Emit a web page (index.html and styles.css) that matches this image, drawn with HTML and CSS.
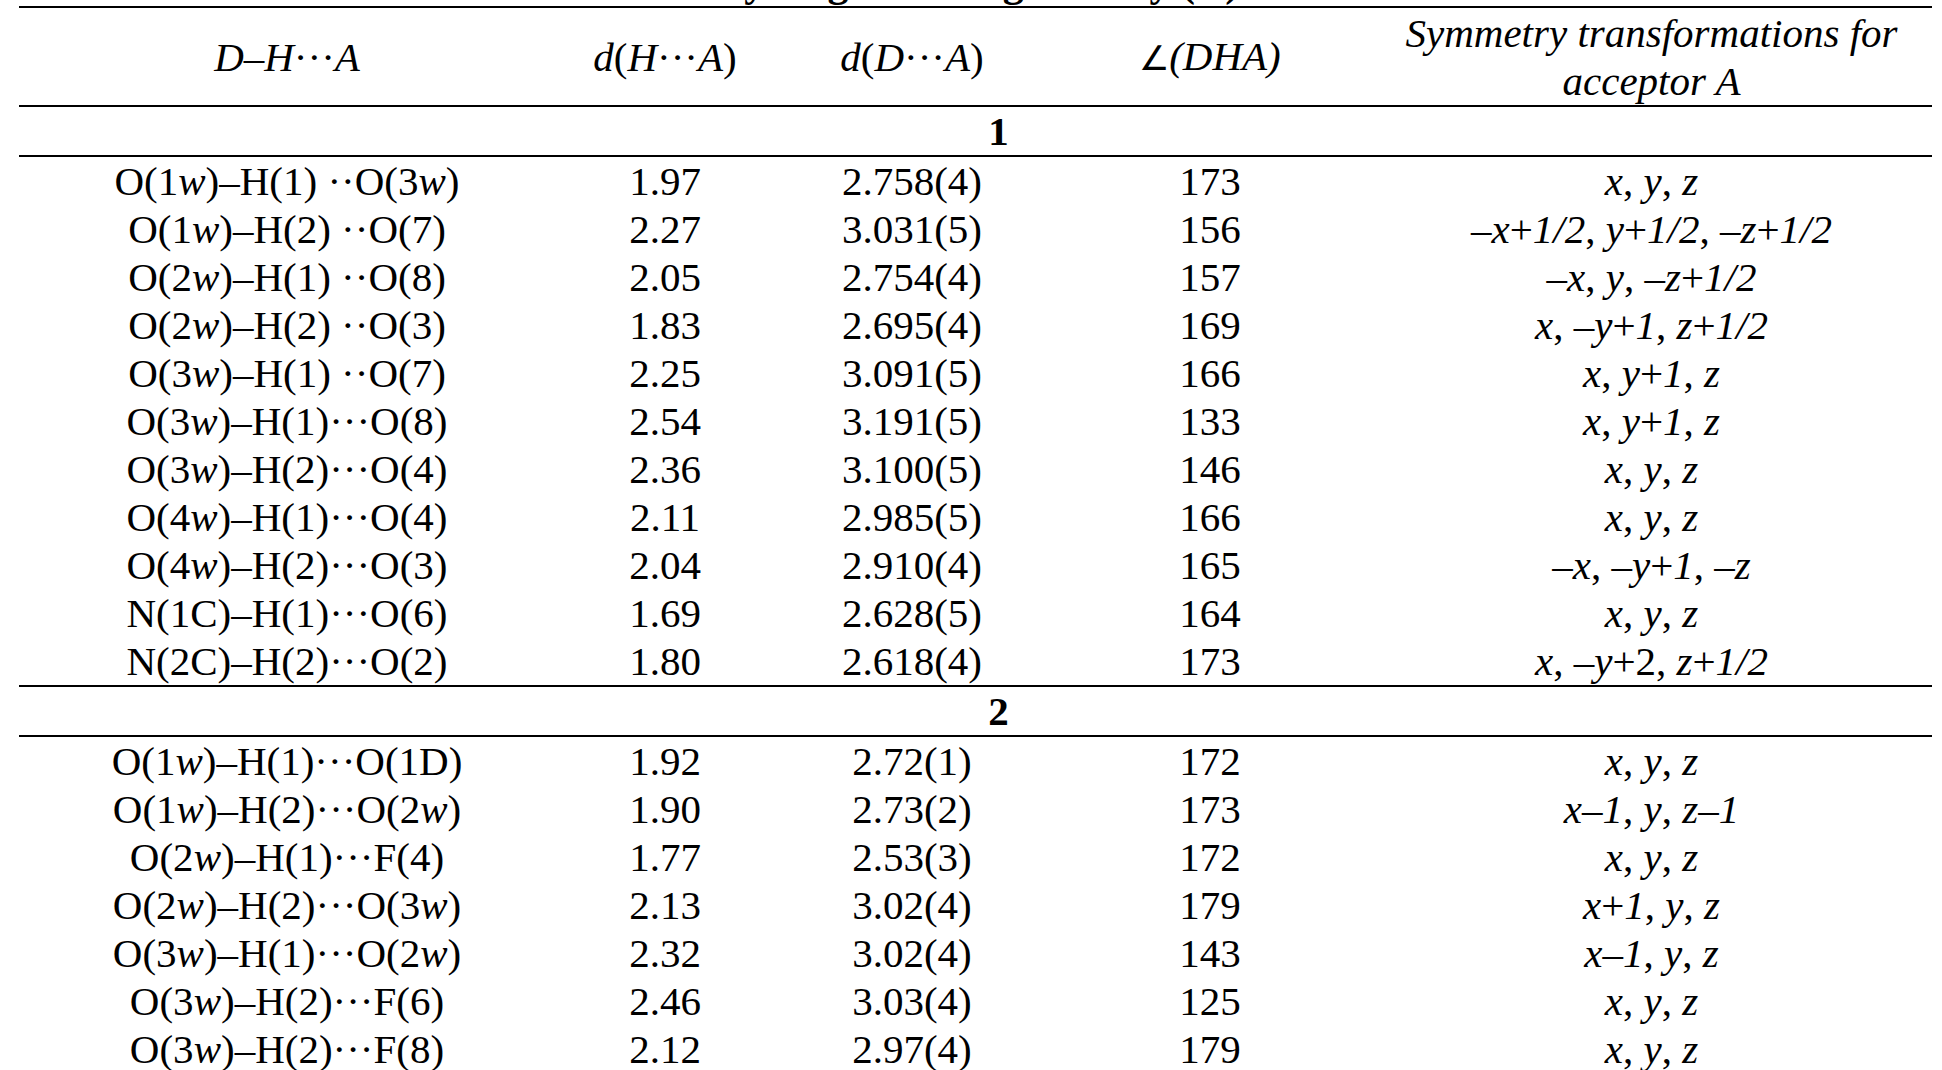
FILE: index.html
```html
<!DOCTYPE html>
<html lang="en">
<head>
<meta charset="utf-8">
<title>Hydrogen bond geometry</title>
<link rel="stylesheet" href="styles.css">
</head>
<body>
<div class="page">
  <div class="caption">Hydrogen bond geometry (Å)</div>
  <table class="hb">
    <colgroup>
      <col class="c1"><col class="c2"><col class="c3"><col class="c4"><col class="c5">
    </colgroup>
    <thead>
      <tr class="head">
        <th><i>D</i>–<i>H</i>···<i>A</i></th>
        <th><i>d</i>(<i>H</i>···<i>A</i>)</th>
        <th><i>d</i>(<i>D</i>···<i>A</i>)</th>
        <th><span class="ang">∠</span><i>(DHA)</i></th>
        <th><i>Symmetry transformations for<br>acceptor A</i></th>
      </tr>
    </thead>
    <tbody>
      <tr class="sec"><td colspan="5"><b>1</b></td></tr>
      <tr><td>O(1<i>w</i>)–H(1) ··O(3<i>w</i>)</td><td>1.97</td><td>2.758(4)</td><td>173</td><td><i>x</i>, <i>y</i>, <i>z</i></td></tr>
      <tr><td>O(1<i>w</i>)–H(2) ··O(7)</td><td>2.27</td><td>3.031(5)</td><td>156</td><td>–<i>x</i>+<i>1/2</i>, <i>y</i>+<i>1/2</i>, –<i>z</i>+<i>1/2</i></td></tr>
      <tr><td>O(2<i>w</i>)–H(1) ··O(8)</td><td>2.05</td><td>2.754(4)</td><td>157</td><td>–<i>x</i>, <i>y</i>, –<i>z</i>+<i>1/2</i></td></tr>
      <tr><td>O(2<i>w</i>)–H(2) ··O(3)</td><td>1.83</td><td>2.695(4)</td><td>169</td><td><i>x</i>, –<i>y</i>+<i>1</i>, <i>z</i>+<i>1/2</i></td></tr>
      <tr><td>O(3<i>w</i>)–H(1) ··O(7)</td><td>2.25</td><td>3.091(5)</td><td>166</td><td><i>x</i>, <i>y</i>+<i>1</i>, <i>z</i></td></tr>
      <tr><td>O(3<i>w</i>)–H(1)···O(8)</td><td>2.54</td><td>3.191(5)</td><td>133</td><td><i>x</i>, <i>y</i>+<i>1</i>, <i>z</i></td></tr>
      <tr><td>O(3<i>w</i>)–H(2)···O(4)</td><td>2.36</td><td>3.100(5)</td><td>146</td><td><i>x</i>, <i>y</i>, <i>z</i></td></tr>
      <tr><td>O(4<i>w</i>)–H(1)···O(4)</td><td>2.11</td><td>2.985(5)</td><td>166</td><td><i>x</i>, <i>y</i>, <i>z</i></td></tr>
      <tr><td>O(4<i>w</i>)–H(2)···O(3)</td><td>2.04</td><td>2.910(4)</td><td>165</td><td>–<i>x</i>, –<i>y</i>+<i>1</i>, –<i>z</i></td></tr>
      <tr><td>N(1C)–H(1)···O(6)</td><td>1.69</td><td>2.628(5)</td><td>164</td><td><i>x</i>, <i>y</i>, <i>z</i></td></tr>
      <tr><td>N(2C)–H(2)···O(2)</td><td>1.80</td><td>2.618(4)</td><td>173</td><td><i>x</i>, –<i>y</i>+2, <i>z</i>+<i>1/2</i></td></tr>
      <tr class="sec sec2"><td colspan="5"><b>2</b></td></tr>
      <tr><td>O(1<i>w</i>)–H(1)···O(1D)</td><td>1.92</td><td>2.72(1)</td><td>172</td><td><i>x</i>, <i>y</i>, <i>z</i></td></tr>
      <tr><td>O(1<i>w</i>)–H(2)···O(2<i>w</i>)</td><td>1.90</td><td>2.73(2)</td><td>173</td><td><i>x</i>–<i>1</i>, <i>y</i>, <i>z</i>–<i>1</i></td></tr>
      <tr><td>O(2<i>w</i>)–H(1)···F(4)</td><td>1.77</td><td>2.53(3)</td><td>172</td><td><i>x</i>, <i>y</i>, <i>z</i></td></tr>
      <tr><td>O(2<i>w</i>)–H(2)···O(3<i>w</i>)</td><td>2.13</td><td>3.02(4)</td><td>179</td><td><i>x</i>+<i>1</i>, <i>y</i>, <i>z</i></td></tr>
      <tr><td>O(3<i>w</i>)–H(1)···O(2<i>w</i>)</td><td>2.32</td><td>3.02(4)</td><td>143</td><td><i>x</i>–<i>1</i>, <i>y</i>, <i>z</i></td></tr>
      <tr><td>O(3<i>w</i>)–H(2)···F(6)</td><td>2.46</td><td>3.03(4)</td><td>125</td><td><i>x</i>, <i>y</i>, <i>z</i></td></tr>
      <tr><td>O(3<i>w</i>)–H(2)···F(8)</td><td>2.12</td><td>2.97(4)</td><td>179</td><td><i>x</i>, <i>y</i>, <i>z</i></td></tr>
    </tbody>
  </table>
</div>
</body>
</html>
```
FILE: styles.css
```css
html, body {
  margin: 0;
  padding: 0;
  background: #ffffff;
  overflow: hidden;
}

.page {
  padding-left: 19px;
  font-family: "Liberation Serif", "Times New Roman", serif;
  color: #000000;
  font-size: 41px;
}

.caption {
  width: 1913px;
  margin-top: -42px;
  height: 48px;
  line-height: 48px;
  text-align: center;
  font-weight: bold;
  font-size: 42px;
}

.hb {
  width: 1913px;
  border-collapse: collapse;
  table-layout: fixed;
  font-size: 41px;
}

.c1 { width: 536px; }
.c2 { width: 220px; }
.c3 { width: 274px; }
.c4 { width: 322px; }
.c5 { width: 561px; }

.hb th,
.hb td {
  padding: 0;
  text-align: center;
  vertical-align: middle;
  line-height: 48px;
  height: 48px;
  white-space: nowrap;
}

.hb th {
  font-weight: normal;
  height: 97px;
}

.head th {
  border-top: 2px solid #000;
  border-bottom: 2px solid #000;
}

.sec td {
  padding-left: 46px;
  border-bottom: 2px solid #000;
}

.sec2 td {
  border-top: 2px solid #000;
}

.ang {
  font-family: "DejaVu Sans", sans-serif;
  font-weight: 200;
  font-size: 34px;
}
```
